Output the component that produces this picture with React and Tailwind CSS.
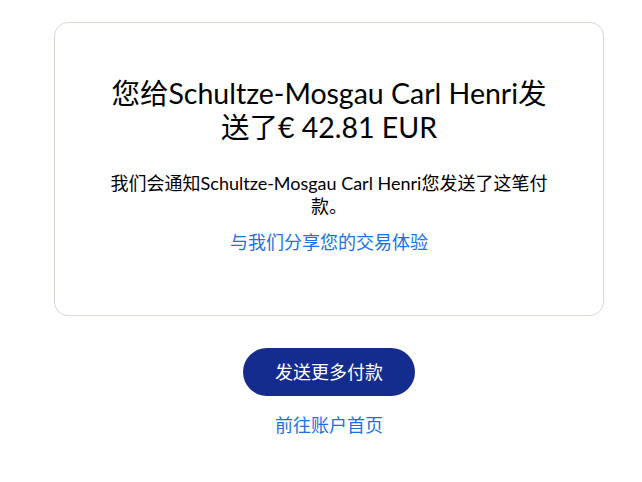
export default function App() {
  const font = { fontFamily: '"Lato", "Noto Sans CJK SC", sans-serif' };

  return (
    <div className="min-h-[482px] bg-white text-black" style={font}>
      <div className="pt-[22px] pl-[54px] w-[604px]">
        <div className="border border-[#dbd8d0] rounded-[14px] h-[294px] flex flex-col items-center pt-[53px] px-[48px]">
          <h1 className="text-[28.5px] leading-[34px] text-center font-normal">
            您给Schultze-Mosgau Carl Henri发送了€ 42.81 EUR
          </h1>
          <p className="mt-[28px] text-[18px] leading-[23px] text-center">
            我们会通知Schultze-Mosgau Carl Henri您发送了这笔付款。
          </p>
          <a href="#" className="mt-[12px] text-[18px] leading-[24px] text-[#1a70e6]">
            与我们分享您的交易体验
          </a>
        </div>
        <div className="flex flex-col items-center mt-[32px]">
          <button className="w-[172px] h-[48px] rounded-full bg-[#142c8e] text-white text-[18px]">
            发送更多付款
          </button>
          <a href="#" className="mt-[17px] text-[18px] leading-[24px] text-[#1a70e6]">
            前往账户首页
          </a>
        </div>
      </div>
    </div>
  );
}
